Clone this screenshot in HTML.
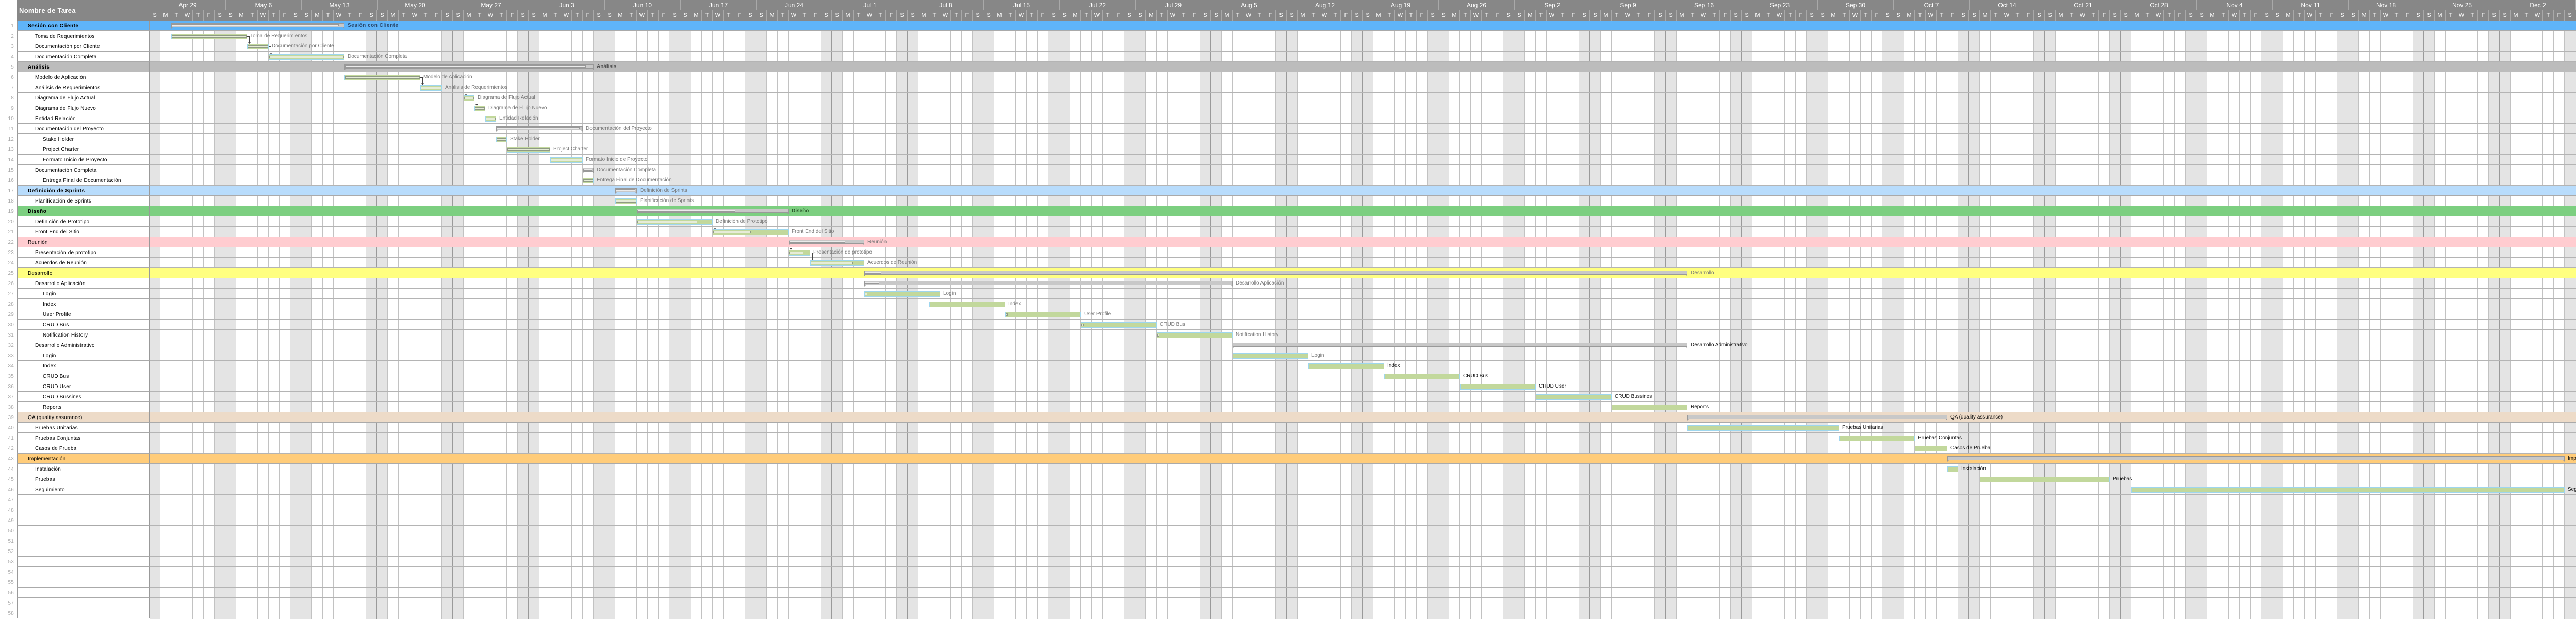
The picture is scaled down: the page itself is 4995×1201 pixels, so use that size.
<!DOCTYPE html>
<html><head><meta charset="utf-8">
<style>
*{margin:0;padding:0}
body{width:4995px;height:1201px;position:relative;overflow:hidden;background:#fff;font-family:"Liberation Sans",sans-serif}
.hdr{position:absolute;left:33px;top:0;width:4962px;height:40px;background:#878787}
.hname{position:absolute;left:37px;top:0;height:40px;line-height:42px;color:#fff;font-weight:bold;font-size:13px;letter-spacing:.3px}
.weeks{position:absolute;left:290px;top:0;height:20px;display:flex;border-left:1px solid #a9a9a9}
.weeks span{width:146px;border-right:1px solid #a9a9a9;height:19px;border-bottom:1px solid #a9a9a9;color:#fff;font-size:12px;text-align:center;line-height:20px;flex:none}
.days{position:absolute;left:290px;top:20px;height:20px;display:flex}
.days i{font-style:normal;width:20px;border-right:1px solid #a9a9a9;height:20px;color:#fff;font-size:11px;text-align:center;line-height:21px;flex:none}
.chart{position:absolute;left:290px;top:40px;width:4705px;height:1161px;
background:
repeating-linear-gradient(to bottom,transparent 0 19px,#b4b4b4 19px 20px),
repeating-linear-gradient(to right,transparent 0 146px,#9a9a9a 146px 147px),
repeating-linear-gradient(to right,transparent 0 20px,#c2c2c2 20px 21px),
repeating-linear-gradient(to right,#e4e4e4 0 21px,#fff 21px 126px,#e4e4e4 126px 147px);}
.left{position:absolute;left:0;top:40px;width:290px}
.r{height:20px;position:relative;font-size:10px;letter-spacing:.2px;line-height:21px;color:#000}
.r .n{position:absolute;left:0;width:27px;text-align:right;color:#aaa;font-weight:normal}
.r .c{position:absolute;left:33px;width:257px;box-sizing:border-box;top:0;height:20px;border-bottom:1px solid #aaa;border-left:1px solid #999;border-right:1px solid #999;background:#fff;white-space:nowrap;overflow:hidden}
.l0{padding-left:20px}.l1{padding-left:34px}.l2{padding-left:49px}
.bd{font-weight:bold;letter-spacing:.5px}
.band{position:absolute;left:290px;width:4705px;height:19px;border-bottom:1px solid #aaa}
.t{position:absolute;height:11px;box-sizing:border-box;background:#c2d89c;border:1px solid #9ed6ee}
.t>i{position:absolute;left:0;top:2px;height:5px;box-sizing:border-box;background:#e6ecd8;border:1px solid #8e9a84}
.s{position:absolute;height:8px;box-sizing:border-box;background:#c8c8c8;border:1px solid #999}
.s:before,.s:after{content:"";position:absolute;bottom:-4px;border-top:4px solid #999}
.s:before{left:-1px;border-right:4px solid transparent}
.s:after{right:-1px;border-left:4px solid transparent}
.s>i{position:absolute;left:0;top:1px;height:4px;box-sizing:border-box;background:#ebebeb;border:1px solid #999}
.L{position:absolute;font-size:10px;line-height:20px;color:#777;white-space:nowrap}
.k{color:#111}
</style></head><body>
<div class="hdr"></div>
<div class="hname">Nombre de Tarea</div>
<div class="weeks"><span>Apr 29</span><span>May 6</span><span>May 13</span><span>May 20</span><span>May 27</span><span>Jun 3</span><span>Jun 10</span><span>Jun 17</span><span>Jun 24</span><span>Jul 1</span><span>Jul 8</span><span>Jul 15</span><span>Jul 22</span><span>Jul 29</span><span>Aug 5</span><span>Aug 12</span><span>Aug 19</span><span>Aug 26</span><span>Sep 2</span><span>Sep 9</span><span>Sep 16</span><span>Sep 23</span><span>Sep 30</span><span>Oct 7</span><span>Oct 14</span><span>Oct 21</span><span>Oct 28</span><span>Nov 4</span><span>Nov 11</span><span>Nov 18</span><span>Nov 25</span><span>Dec 2</span></div>
<div class="days">
<i>S</i><i>M</i><i>T</i><i>W</i><i>T</i><i>F</i><i>S</i><i>S</i><i>M</i><i>T</i><i>W</i><i>T</i><i>F</i><i>S</i><i>S</i><i>M</i><i>T</i><i>W</i><i>T</i><i>F</i><i>S</i><i>S</i><i>M</i><i>T</i><i>W</i><i>T</i><i>F</i><i>S</i>
<i>S</i><i>M</i><i>T</i><i>W</i><i>T</i><i>F</i><i>S</i><i>S</i><i>M</i><i>T</i><i>W</i><i>T</i><i>F</i><i>S</i><i>S</i><i>M</i><i>T</i><i>W</i><i>T</i><i>F</i><i>S</i><i>S</i><i>M</i><i>T</i><i>W</i><i>T</i><i>F</i><i>S</i>
<i>S</i><i>M</i><i>T</i><i>W</i><i>T</i><i>F</i><i>S</i><i>S</i><i>M</i><i>T</i><i>W</i><i>T</i><i>F</i><i>S</i><i>S</i><i>M</i><i>T</i><i>W</i><i>T</i><i>F</i><i>S</i><i>S</i><i>M</i><i>T</i><i>W</i><i>T</i><i>F</i><i>S</i>
<i>S</i><i>M</i><i>T</i><i>W</i><i>T</i><i>F</i><i>S</i><i>S</i><i>M</i><i>T</i><i>W</i><i>T</i><i>F</i><i>S</i><i>S</i><i>M</i><i>T</i><i>W</i><i>T</i><i>F</i><i>S</i><i>S</i><i>M</i><i>T</i><i>W</i><i>T</i><i>F</i><i>S</i>
<i>S</i><i>M</i><i>T</i><i>W</i><i>T</i><i>F</i><i>S</i><i>S</i><i>M</i><i>T</i><i>W</i><i>T</i><i>F</i><i>S</i><i>S</i><i>M</i><i>T</i><i>W</i><i>T</i><i>F</i><i>S</i><i>S</i><i>M</i><i>T</i><i>W</i><i>T</i><i>F</i><i>S</i>
<i>S</i><i>M</i><i>T</i><i>W</i><i>T</i><i>F</i><i>S</i><i>S</i><i>M</i><i>T</i><i>W</i><i>T</i><i>F</i><i>S</i><i>S</i><i>M</i><i>T</i><i>W</i><i>T</i><i>F</i><i>S</i><i>S</i><i>M</i><i>T</i><i>W</i><i>T</i><i>F</i><i>S</i>
<i>S</i><i>M</i><i>T</i><i>W</i><i>T</i><i>F</i><i>S</i><i>S</i><i>M</i><i>T</i><i>W</i><i>T</i><i>F</i><i>S</i><i>S</i><i>M</i><i>T</i><i>W</i><i>T</i><i>F</i><i>S</i><i>S</i><i>M</i><i>T</i><i>W</i><i>T</i><i>F</i><i>S</i>
<i>S</i><i>M</i><i>T</i><i>W</i><i>T</i><i>F</i><i>S</i><i>S</i><i>M</i><i>T</i><i>W</i><i>T</i><i>F</i><i>S</i><i>S</i><i>M</i><i>T</i><i>W</i><i>T</i><i>F</i><i>S</i><i>S</i><i>M</i><i>T</i><i>W</i><i>T</i><i>F</i><i>S</i>
</div>
<div class="chart"></div>
<div class="band" style="top:40px;background:#5fb4f9"></div>
<div class="band" style="top:120px;background:#bcbcbc"></div>
<div class="band" style="top:360px;background:#b8dcfc"></div>
<div class="band" style="top:400px;background:#7ccf80"></div>
<div class="band" style="top:460px;background:#ffccd0"></div>
<div class="band" style="top:520px;background:#ffff80"></div>
<div class="band" style="top:800px;background:#eddbc8"></div>
<div class="band" style="top:880px;background:#ffcc7a"></div>

<div class="left">
<div class="r"><b class="n">1</b><div class="c l0 bd" style="background:#5fb4f9">Sesión con Cliente</div></div>
<div class="r"><b class="n">2</b><div class="c l1">Toma de Requerimientos</div></div>
<div class="r"><b class="n">3</b><div class="c l1">Documentación por Cliente</div></div>
<div class="r"><b class="n">4</b><div class="c l1">Documentación Completa</div></div>
<div class="r"><b class="n">5</b><div class="c l0 bd" style="background:#bcbcbc">Análisis</div></div>
<div class="r"><b class="n">6</b><div class="c l1">Modelo de Aplicación</div></div>
<div class="r"><b class="n">7</b><div class="c l1">Análisis de Requerimientos</div></div>
<div class="r"><b class="n">8</b><div class="c l1">Diagrama de Flujo Actual</div></div>
<div class="r"><b class="n">9</b><div class="c l1">Diagrama de Flujo Nuevo</div></div>
<div class="r"><b class="n">10</b><div class="c l1">Entidad Relación</div></div>
<div class="r"><b class="n">11</b><div class="c l1">Documentación del Proyecto</div></div>
<div class="r"><b class="n">12</b><div class="c l2">Stake Holder</div></div>
<div class="r"><b class="n">13</b><div class="c l2">Project Charter</div></div>
<div class="r"><b class="n">14</b><div class="c l2">Formato Inicio de Proyecto</div></div>
<div class="r"><b class="n">15</b><div class="c l1">Documentación Completa</div></div>
<div class="r"><b class="n">16</b><div class="c l2">Entrega Final de Documentación</div></div>
<div class="r"><b class="n">17</b><div class="c l0 bd" style="background:#b8dcfc">Definición de Sprints</div></div>
<div class="r"><b class="n">18</b><div class="c l1">Planificación de Sprints</div></div>
<div class="r"><b class="n">19</b><div class="c l0 bd" style="background:#7ccf80">Diseño</div></div>
<div class="r"><b class="n">20</b><div class="c l1">Definición de Prototipo</div></div>
<div class="r"><b class="n">21</b><div class="c l1">Front End del Sitio</div></div>
<div class="r"><b class="n">22</b><div class="c l0" style="background:#ffccd0">Reunión</div></div>
<div class="r"><b class="n">23</b><div class="c l1">Presentación de prototipo</div></div>
<div class="r"><b class="n">24</b><div class="c l1">Acuerdos de Reunión</div></div>
<div class="r"><b class="n">25</b><div class="c l0" style="background:#ffff80">Desarrollo</div></div>
<div class="r"><b class="n">26</b><div class="c l1">Desarrollo Aplicación</div></div>
<div class="r"><b class="n">27</b><div class="c l2">Login</div></div>
<div class="r"><b class="n">28</b><div class="c l2">Index</div></div>
<div class="r"><b class="n">29</b><div class="c l2">User Profile</div></div>
<div class="r"><b class="n">30</b><div class="c l2">CRUD Bus</div></div>
<div class="r"><b class="n">31</b><div class="c l2">Notification History</div></div>
<div class="r"><b class="n">32</b><div class="c l1">Desarrollo Administrativo</div></div>
<div class="r"><b class="n">33</b><div class="c l2">Login</div></div>
<div class="r"><b class="n">34</b><div class="c l2">Index</div></div>
<div class="r"><b class="n">35</b><div class="c l2">CRUD Bus</div></div>
<div class="r"><b class="n">36</b><div class="c l2">CRUD User</div></div>
<div class="r"><b class="n">37</b><div class="c l2">CRUD Bussines</div></div>
<div class="r"><b class="n">38</b><div class="c l2">Reports</div></div>
<div class="r"><b class="n">39</b><div class="c l0" style="background:#eddbc8">QA (quality assurance)</div></div>
<div class="r"><b class="n">40</b><div class="c l1">Pruebas Unitarias</div></div>
<div class="r"><b class="n">41</b><div class="c l1">Pruebas Conjuntas</div></div>
<div class="r"><b class="n">42</b><div class="c l1">Casos de Prueba</div></div>
<div class="r"><b class="n">43</b><div class="c l0" style="background:#ffcc7a">Implementación</div></div>
<div class="r"><b class="n">44</b><div class="c l1">Instalación</div></div>
<div class="r"><b class="n">45</b><div class="c l1">Pruebas</div></div>
<div class="r"><b class="n">46</b><div class="c l1">Seguimiento</div></div>
<div class="r"><b class="n">47</b><div class="c"></div></div>
<div class="r"><b class="n">48</b><div class="c"></div></div>
<div class="r"><b class="n">49</b><div class="c"></div></div>
<div class="r"><b class="n">50</b><div class="c"></div></div>
<div class="r"><b class="n">51</b><div class="c"></div></div>
<div class="r"><b class="n">52</b><div class="c"></div></div>
<div class="r"><b class="n">53</b><div class="c"></div></div>
<div class="r"><b class="n">54</b><div class="c"></div></div>
<div class="r"><b class="n">55</b><div class="c"></div></div>
<div class="r"><b class="n">56</b><div class="c"></div></div>
<div class="r"><b class="n">57</b><div class="c"></div></div>
<div class="r"><b class="n">58</b><div class="c"></div></div>
</div>

<div class="s" style="left:332px;top:45px;width:336px"><i style="width:97%"></i></div><span class="L bd" style="left:674px;top:40px;color:#2b4a6f;font-weight:bold">Sesión con Cliente</span>
<div class="t" style="left:332px;top:65px;width:147px"><i style="width:100%"></i></div><span class="L" style="left:485px;top:60px">Toma de Requerimientos</span>
<div class="t" style="left:479px;top:85px;width:42px"><i style="width:100%"></i></div><span class="L" style="left:527px;top:80px">Documentación por Cliente</span>
<div class="t" style="left:521px;top:105px;width:147px"><i style="width:100%"></i></div><span class="L" style="left:674px;top:100px">Documentación Completa</span>
<div class="s" style="left:668px;top:125px;width:483px"><i style="width:97%"></i></div><span class="L" style="left:1157px;top:120px;color:#555;font-weight:bold">Análisis</span>
<div class="t" style="left:668px;top:145px;width:147px"><i style="width:100%"></i></div><span class="L" style="left:821px;top:140px">Modelo de Aplicación</span>
<div class="t" style="left:815px;top:165px;width:42px"><i style="width:100%"></i></div><span class="L" style="left:863px;top:160px">Análisis de Requerimientos</span>
<div class="t" style="left:899px;top:185px;width:21px"><i style="width:100%"></i></div><span class="L" style="left:926px;top:180px">Diagrama de Flujo Actual</span>
<div class="t" style="left:920px;top:205px;width:21px"><i style="width:100%"></i></div><span class="L" style="left:947px;top:200px">Diagrama de Flujo Nuevo</span>
<div class="t" style="left:941px;top:225px;width:21px"><i style="width:100%"></i></div><span class="L" style="left:968px;top:220px">Entidad Relación</span>
<div class="s" style="left:962px;top:245px;width:168px"><i style="width:97%"></i></div><span class="L" style="left:1136px;top:240px">Documentación del Proyecto</span>
<div class="t" style="left:962px;top:265px;width:21px"><i style="width:100%"></i></div><span class="L" style="left:989px;top:260px">Stake Holder</span>
<div class="t" style="left:983px;top:285px;width:84px"><i style="width:100%"></i></div><span class="L" style="left:1073px;top:280px">Project Charter</span>
<div class="t" style="left:1067px;top:305px;width:63px"><i style="width:100%"></i></div><span class="L" style="left:1136px;top:300px">Formato Inicio de Proyecto</span>
<div class="s" style="left:1130px;top:325px;width:21px"><i style="width:90%"></i></div><span class="L" style="left:1157px;top:320px">Documentación Completa</span>
<div class="t" style="left:1130px;top:345px;width:21px"><i style="width:100%"></i></div><span class="L" style="left:1157px;top:340px">Entrega Final de Documentación</span>
<div class="s" style="left:1193px;top:365px;width:42px"><i style="width:95%"></i></div><span class="L" style="left:1241px;top:360px">Definición de Sprints</span>
<div class="t" style="left:1193px;top:385px;width:42px"><i style="width:100%"></i></div><span class="L" style="left:1241px;top:380px">Planificación de Sprints</span>
<div class="s" style="left:1235px;top:405px;width:294px"><i style="width:65%"></i></div><span class="L" style="left:1535px;top:400px;color:#2d5a2d;font-weight:bold">Diseño</span>
<div class="t" style="left:1235px;top:425px;width:147px"><i style="width:80%"></i></div><span class="L" style="left:1388px;top:420px">Definición de Prototipo</span>
<div class="t" style="left:1382px;top:445px;width:147px"><i style="width:50%"></i></div><span class="L" style="left:1535px;top:440px">Front End del Sitio</span>
<div class="s" style="left:1529px;top:465px;width:147px"><i style="width:75%"></i></div><span class="L" style="left:1682px;top:460px">Reunión</span>
<div class="t" style="left:1529px;top:485px;width:42px"><i style="width:70%"></i></div><span class="L" style="left:1577px;top:480px">Presentación de prototipo</span>
<div class="t" style="left:1571px;top:505px;width:105px"><i style="width:80%"></i></div><span class="L" style="left:1682px;top:500px">Acuerdos de Reunión</span>
<div class="s" style="left:1676px;top:525px;width:1596px"><i style="width:32px"></i></div><span class="L" style="left:3278px;top:520px">Desarrollo</span>
<div class="s" style="left:1676px;top:545px;width:714px"><i style="width:28px"></i></div><span class="L" style="left:2396px;top:540px">Desarrollo Aplicación</span>
<div class="t" style="left:1676px;top:565px;width:147px"><i style="width:5px"></i></div><span class="L" style="left:1829px;top:560px">Login</span>
<div class="t" style="left:1802px;top:585px;width:147px"></div><span class="L" style="left:1955px;top:580px">Index</span>
<div class="t" style="left:1949px;top:605px;width:147px"><i style="width:4px"></i></div><span class="L" style="left:2102px;top:600px">User Profile</span>
<div class="t" style="left:2096px;top:625px;width:147px"><i style="width:4px"></i></div><span class="L" style="left:2249px;top:620px">CRUD Bus</span>
<div class="t" style="left:2243px;top:645px;width:147px"><i style="width:4px"></i></div><span class="L" style="left:2396px;top:640px">Notification History</span>
<div class="s" style="left:2390px;top:665px;width:882px"></div><span class="L k" style="left:3278px;top:660px">Desarrollo Administrativo</span>
<div class="t" style="left:2390px;top:685px;width:147px"></div><span class="L" style="left:2543px;top:680px">Login</span>
<div class="t" style="left:2537px;top:705px;width:147px"></div><span class="L k" style="left:2690px;top:700px">Index</span>
<div class="t" style="left:2684px;top:725px;width:147px"></div><span class="L k" style="left:2837px;top:720px">CRUD Bus</span>
<div class="t" style="left:2831px;top:745px;width:147px"></div><span class="L k" style="left:2984px;top:740px">CRUD User</span>
<div class="t" style="left:2978px;top:765px;width:147px"></div><span class="L k" style="left:3131px;top:760px">CRUD Bussines</span>
<div class="t" style="left:3125px;top:785px;width:147px"></div><span class="L k" style="left:3278px;top:780px">Reports</span>
<div class="s" style="left:3272px;top:805px;width:504px"></div><span class="L k" style="left:3782px;top:800px">QA (quality assurance)</span>
<div class="t" style="left:3272px;top:825px;width:294px"></div><span class="L k" style="left:3572px;top:820px">Pruebas Unitarias</span>
<div class="t" style="left:3566px;top:845px;width:147px"></div><span class="L k" style="left:3719px;top:840px">Pruebas Conjuntas</span>
<div class="t" style="left:3713px;top:865px;width:63px"></div><span class="L k" style="left:3782px;top:860px">Casos de Prueba</span>
<div class="s" style="left:3776px;top:885px;width:1197px"></div><span class="L k" style="left:4979px;top:880px">Implementación</span>
<div class="t" style="left:3776px;top:905px;width:21px"></div><span class="L k" style="left:3803px;top:900px">Instalación</span>
<div class="t" style="left:3839px;top:925px;width:252px"></div><span class="L k" style="left:4097px;top:920px">Pruebas</span>
<div class="t" style="left:4133px;top:945px;width:840px"></div><span class="L k" style="left:4979px;top:940px">Seguimiento</span>

<svg width="4995" height="1201" style="position:absolute;left:0;top:0" fill="none" stroke="#444" stroke-width="1">
<path d="M479 70.5H483.5V84M521 90.5H525.5V104M668 110.5H903.5V184M857 170.5H903.5M815 150.5H819.5V164M920 190.5H924.5V204M1382 430.5H1386.5V444M1529 450.5H1533.5V484M1571 490.5H1575.5V504"/>
<g fill="#444" stroke="none">
<path d="M481 82h5l-2.5 3z"/><path d="M523 102h5l-2.5 3z"/><path d="M901 182h5l-2.5 3z"/><path d="M817 162h5l-2.5 3z"/><path d="M922 202h5l-2.5 3z"/><path d="M1384 442h5l-2.5 3z"/><path d="M1531 482h5l-2.5 3z"/><path d="M1573 502h5l-2.5 3z"/>
</g>
</svg>
</body></html>
